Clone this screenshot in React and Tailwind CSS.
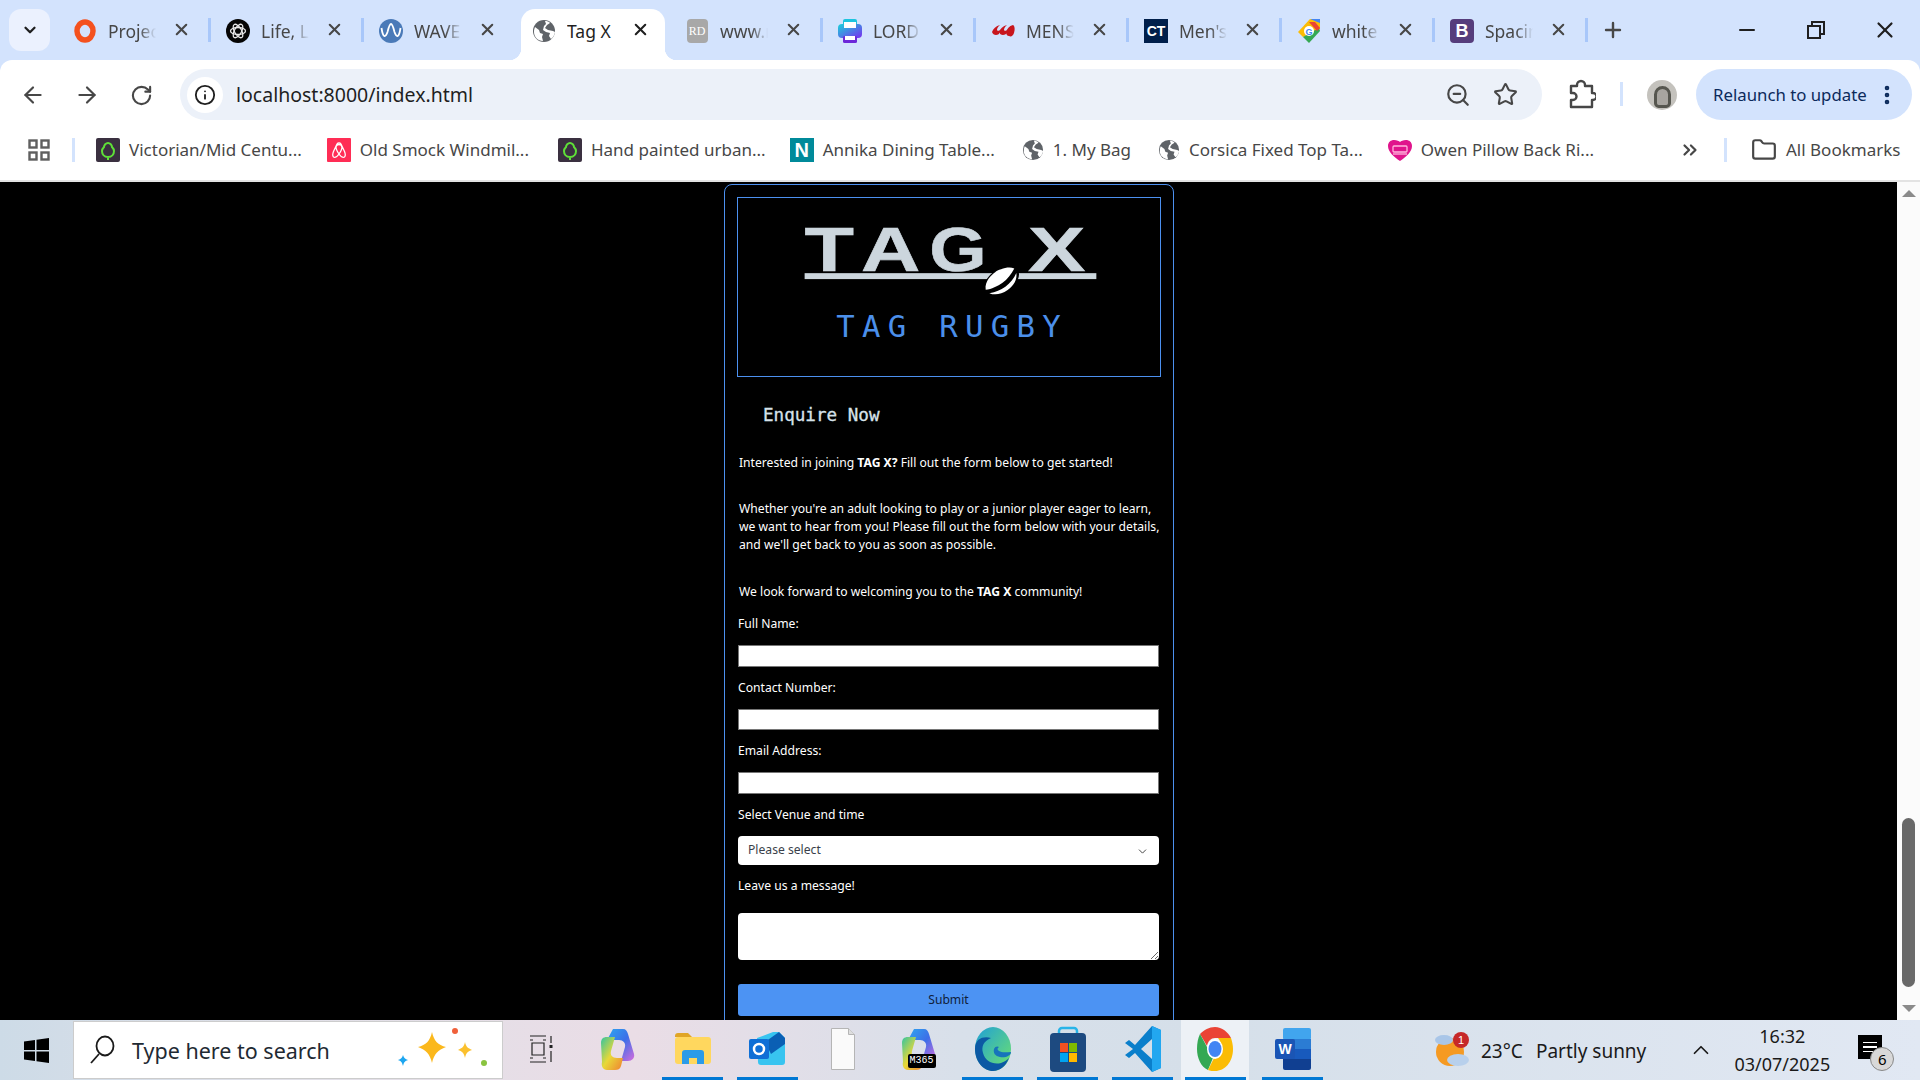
import React from 'react';
import { ArrowLeft, ArrowRight, RotateCw, ZoomOut, Star, Folder, X, Plus, Minus, ChevronDown, ChevronsRight, ChevronUp, EllipsisVertical, Info } from 'lucide-react';

const Globe = ({ size = 24 }) => (
    <svg width={size} height={size} viewBox="0 0 24 24">
        <circle cx="12" cy="12" r="11" fill="#5f6368" />
        <path d="M3 8l4 3 1 3 3 1-1 3 1 4c-5 0-9-4-9-9 0-2 .4-3.500 1-5z" fill="#fff" />
        <path d="M13 2c2 0 4 .6 5 2l-3 2-2 3 3 2 5 1 2 1c-.4 3-2 5.500-4 7l-2-3 1-3-4-1-3-2 1-4 2-2z" fill="#fff" />
    </svg>
);

const Ring = () => (
    <svg width="24" height="24" viewBox="0 0 24 24"><ellipse cx="12" cy="12" rx="8" ry="9" fill="none" stroke="#f4511e" strokeWidth="5.500" /></svg>
);

const Knot = () => (
    <svg width="24" height="24" viewBox="0 0 24 24">
        <circle cx="12" cy="12" r="12" fill="#050505" />
        <g fill="none" stroke="#e8e8e8" strokeWidth="1.300">
            <ellipse cx="12" cy="12" rx="7.500" ry="3.500" />
            <ellipse cx="12" cy="12" rx="7.500" ry="3.500" transform="rotate(60 12 12)" />
            <ellipse cx="12" cy="12" rx="7.500" ry="3.500" transform="rotate(120 12 12)" />
        </g>
    </svg>
);

const Wave = () => (
    <svg width="24" height="24" viewBox="0 0 24 24">
        <circle cx="12" cy="12" r="12" fill="#4a7ab8" />
        <path d="M2.500 9c1.500 10 4 10 6 4 1-4 2-8 3.500-8s2.500 4 3.500 8c2 6 4.500 6 6-4" fill="none" stroke="#fff" strokeWidth="1.800" />
    </svg>
);

const Rd = () => (
    <div className="w-[21px] h-[24px] rounded-[4px] bg-[#a8a8a8] text-white text-[12px] flex items-center justify-center font-['Liberation_Serif',serif]">RD</div>
);

const Printer = () => (
    <svg width="24" height="24" viewBox="0 0 24 24">
        <defs>
            <linearGradient id="pr" x1="0" y1="0" x2="1" y2="1">
                <stop offset="0" stopColor="#19d3da" />
                <stop offset="1" stopColor="#7a2df0" />
            </linearGradient>
        </defs>
        <rect x="5" y="0" width="14" height="8" rx="2" fill="#1cc4de" />
        <rect x="0" y="5" width="24" height="14" rx="4" fill="url(#pr)" />
        <rect x="6" y="3" width="12" height="6" fill="#fff" />
        <rect x="5" y="17" width="14" height="7" rx="1.500" fill="#6d28d9" />
        <rect x="7" y="17" width="10" height="4" fill="#fff" />
    </svg>
);

const Ccc = () => (
    <svg width="24" height="24" viewBox="0 0 24 24">
        <path d="M1 13c1-3 4-6 8-7-2 2-3 3-3 5 1 2 3 0 4-1-1 2-2 3-2 5-3 2-6 1-7-2zM8 13c1-3 4-6 8-7-2 2-3 3-3 5 1 2 3 0 4-1-1 2-2 3-2 5-3 2-6 1-7-2zM15 13c1-3 3-6 7-7 2 1 2 5 1 8-1 3-3 4-5 3-2 0-3-2-3-4z" fill="#c8161d" />
    </svg>
);

const Ct = () => (
    <div className="w-[24px] h-[24px] bg-[#001f4b] text-white text-[14px] font-bold flex items-center justify-center font-['Liberation_Sans',sans-serif]">CT</div>
);

const GoogleTag = () => (
    <svg width="24" height="24" viewBox="0 0 24 24">
        <path d="M13 0h10v10z" fill="#4285f4" />
        <path d="M13 0L1 13l5 5L23 10V4z" fill="#fbbc04" />
        <path d="M6 18l6 6 11-12-1-3z" fill="#34a853" />
        <path d="M12 3l6 0 5 6-3 3z" fill="#ea4335" />
        <circle cx="12" cy="12" r="5" fill="#fff" />
        <text x="12" y="15.500" textAnchor="middle" fontSize="9" fontWeight="700" fill="#4285f4" fontFamily="Liberation Sans">G</text>
    </svg>
);

const Boot = () => (
    <div className="w-[24px] h-[24px] rounded-[4px] bg-[#563d7c] text-white text-[18px] font-bold flex items-center justify-center font-['Liberation_Sans',sans-serif]">B</div>
);

const Tree = () => (
    <svg width="24" height="24" viewBox="0 0 24 24">
        <rect width="24" height="24" rx="2" fill="#3a3040" />
        <path d="M12 19c-4 0-6-3-6-6 0-2 1-3 2-4 0-2 2-4 4-4s4 2 4 4c1 1 2 2 2 4 0 3-2 6-6 6zm0 0v3" fill="none" stroke="#5fe038" strokeWidth="2" />
    </svg>
);

const Airbnb = () => (
    <svg width="24" height="24" viewBox="0 0 24 24">
        <rect width="24" height="24" rx="1" fill="#ff2d55" />
        <path d="M12 16c-2-3-3-5-3-6.500a3 3 0 0 1 6 0c0 1.500-1 3.500-3 6.500zm0 0c2 3 4 4 5.500 3 1.500-1.500 1-3 0-5.500L14 6c-1-1.500-3-1.500-4 0l-3.500 7.500c-1 2.500-1.500 4 0 5.500 1.500 1 3.500 0 5.500-3z" fill="none" stroke="#fff" strokeWidth="1.300" />
    </svg>
);

const Annika = () => (
    <div className="w-[24px] h-[24px] bg-[#008a9a] text-white text-[20px] font-bold flex items-center justify-center font-['Liberation_Sans',sans-serif]">N</div>
);

const Heart = () => (
    <svg width="24" height="24" viewBox="0 0 24 24">
        <path d="M12 23C6 19 0 14 0 8c0-4 3-6 6-6 3 0 5 1 6 2 1-1 3-2 6-2 3 0 6 2 6 6 0 6-6 11-12 15z" fill="#e0148c" />
        <rect x="5" y="8" width="14" height="6" rx="1" fill="none" stroke="#ffb6dd" strokeWidth="1.300" />
        <path d="M5 16h14" stroke="#ffb6dd" strokeWidth="1.300" />
    </svg>
);

const tabs = [
    { title: 'Project', icon: <Ring /> },
    { title: 'Life, Lessons', icon: <Knot /> },
    { title: 'WAVE Report', icon: <Wave /> },
    { title: 'Tag X', icon: <Globe />, active: true },
    { title: 'www.rugby', icon: <Rd /> },
    { title: 'LORD Print', icon: <Printer /> },
    { title: 'MENS Rugby', icon: <Ccc /> },
    { title: "Men's Tops", icon: <Ct /> },
    { title: 'white shirt', icon: <GoogleTag /> },
    { title: 'Spacing', icon: <Boot /> },
];

const bookmarks = [
    { label: 'Victorian/Mid Centu...', icon: <Tree />, cls: 'ml-[21px]' },
    { label: 'Old Smock Windmil...', icon: <Airbnb />, cls: 'ml-[25px]' },
    { label: 'Hand painted urban...', icon: <Tree />, cls: 'ml-[29px]' },
    { label: 'Annika Dining Table...', icon: <Annika />, cls: 'ml-[24px]' },
    { label: '1. My Bag', icon: <Globe size={22} />, cls: 'ml-[27px]' },
    { label: 'Corsica Fixed Top Ta...', icon: <Globe size={22} />, cls: 'ml-[27px]' },
    { label: 'Owen Pillow Back Ri...', icon: <Heart />, cls: 'ml-[25px]' },
];

const Tab = ({ tab }) => (
    <div className="relative w-[153px] h-[60px] shrink-0 flex items-center">
        {tab.active && (
            <>
                <div className="absolute left-[4px] right-[5px] top-[9px] bottom-0 bg-white rounded-t-[14px]" />
                <div className="absolute left-[-8px] bottom-0 w-[12px] h-[12px] bg-[radial-gradient(circle_at_0_0,transparent_12px,white_12.5px)]" />
                <div className="absolute right-[-7px] bottom-0 w-[12px] h-[12px] bg-[radial-gradient(circle_at_100%_0,transparent_12px,white_12.5px)]" />
            </>
        )}
        <div className="relative flex items-center pl-[15px] mt-[2px]">
            <div className="w-[24px] h-[24px] flex items-center justify-center">{tab.icon}</div>
            <div className={tab.active
                ? "ml-[11px] w-[48px] overflow-hidden whitespace-nowrap text-[17.5px] text-[#1f1f1f]"
                : "ml-[11px] w-[48px] overflow-hidden whitespace-nowrap text-[17.5px] text-[#474747] [mask-image:linear-gradient(to_right,black_65%,transparent)]"}>{tab.title}</div>
            <X size={19} strokeWidth={2.6} className={tab.active ? "ml-[16px] -mt-[3px] text-[#1f1f1f]" : "ml-[16px] -mt-[3px] text-[#474747]"} />
        </div>
        {!tab.active && tab.title !== 'WAVE Report' && <div className="absolute right-0 top-[18px] w-[3px] h-[24px] bg-[#a8c7fa]" />}
    </div>
);

const Field = ({ label }) => (
    <div className="mt-[12px] first:mt-[14px]">
        <label className="block h-[18px] leading-[18px] text-[12.15px] text-white ml-[1px]">{label}</label>
        <input type="text" className="block mt-[12px] ml-[1px] w-[421px] h-[21.5px] bg-white border border-[#767676]" />
    </div>
);

const Slot = ({ children, on, width = 'w-[75px]' }) => (
    <div className={`${width} h-full shrink-0 flex flex-col items-center`}>
        <div className="flex-1 flex items-center justify-center">{children}</div>
        <div className={on ? "w-[61px] h-[3px] bg-[#0078d4]" : "w-[61px] h-[3px]"} />
    </div>
);

const Files = () => (
    <svg width="38" height="36" viewBox="0 0 38 36">
        <path d="M1 5a3 3 0 0 1 3-3h10l4 4H1z" fill="#e0a526" />
        <rect x="1" y="6" width="36" height="27" rx="3" fill="#ffd75e" />
        <path d="M8 33V22a3 3 0 0 1 3-3h16a3 3 0 0 1 3 3v11h-7v-6h-8v6z" fill="#2b9be8" />
    </svg>
);

const Outlook = () => (
    <svg width="38" height="38" viewBox="0 0 38 38">
        <path d="M8 8L24 2h6l6 6v24a3 3 0 0 1-3 3H12a3 3 0 0 1-3-3z" fill="#38c4f0" />
        <path d="M16 12L30 2l6 6v6L22 24z" fill="#0a5fb4" />
        <rect x="0" y="9" width="20" height="20" rx="2" fill="#0f6fd6" />
        <circle cx="10" cy="19" r="5" fill="none" stroke="#fff" strokeWidth="2.500" />
    </svg>
);

const BlankFile = () => (
    <svg width="24" height="42" viewBox="0 0 24 42">
        <path d="M.5.5h17l6 6v35H.500z" fill="#fafafa" stroke="#b5b5b5" />
        <path d="M17.500.5v6h6" fill="#dedede" stroke="#b5b5b5" />
    </svg>
);

const CopilotMark = ({ w = 36, h = 44 }) => (
    <svg width={w} height={h} viewBox="0 0 36 44">
        <defs>
            <linearGradient id="cpa" x1="0" y1="0" x2="1" y2="1">
                <stop offset="0" stopColor="#2ea6f0" />
                <stop offset="0.5" stopColor="#3c6fe8" />
                <stop offset="1" stopColor="#d66cdc" />
            </linearGradient>
            <linearGradient id="cpb" x1="0" y1="0" x2="1" y2="1">
                <stop offset="0" stopColor="#34c4a0" />
                <stop offset="0.5" stopColor="#e8d838" />
                <stop offset="1" stopColor="#f08030" />
            </linearGradient>
        </defs>
        <path d="M14 2h10c3 0 4 2 5 5l6 20c1 4-2 7-6 7h-7l4-14c1-4-2-7-6-7H8z" fill="url(#cpa)" />
        <path d="M2 16c0-4 2-6 6-6h8l-4 14c-1 4 1 7 6 7h6l-2 8c-1 3-3 4-6 4H8c-4 0-6-4-5-8z" fill="url(#cpb)" />
    </svg>
);

const Edge = () => (
    <svg width="38" height="46" viewBox="0 0 38 46">
        <defs>
            <linearGradient id="edg" x1="0" y1="0" x2="1" y2="1">
                <stop offset="0" stopColor="#1f9fd8" />
                <stop offset="1" stopColor="#6fe36b" />
            </linearGradient>
        </defs>
        <ellipse cx="19" cy="23" rx="18" ry="22" fill="url(#edg)" />
        <path d="M1 23C1 12 10 10 17 12c-7 3-10 8-8 15 2 8 10 12 18 10 3-1 6-3 8-5-3 8-9 13-16 13C9 45 1 35 1 23z" fill="#0c59a4" />
        <path d="M37 26c0 4-6 6-11 5-5-1-7-4-6-8 1-3 4-3 5-2-2 1-2 3 0 4 3 2 8 1 12 1z" fill="#1774bb" />
    </svg>
);

const Store = () => (
    <svg width="36" height="46" viewBox="0 0 36 46">
        <path d="M9 12V5a3 3 0 0 1 3-3h12a3 3 0 0 1 3 3v7" fill="none" stroke="#28b4e8" strokeWidth="2.500" />
        <rect x="0" y="7" width="36" height="39" rx="4" fill="#1d4a80" />
        <rect x="10" y="17" width="8" height="9" fill="#f25022" />
        <rect x="19" y="17" width="8" height="9" fill="#7fba00" />
        <rect x="10" y="27" width="8" height="9" fill="#00a4ef" />
        <rect x="19" y="27" width="8" height="9" fill="#ffb900" />
    </svg>
);

const Vscode = () => (
    <svg width="36" height="46" viewBox="0 0 36 46">
        <path d="M27 0l9 4v38l-9 4L10 27 4 32l-4-3 8-6-8-6 4-3 6 5zm0 13L16 23l11 10z" fill="#0a7fcb" />
        <path d="M27 0l9 4v38l-9 4z" fill="#22a7f0" />
    </svg>
);

const Chrome = () => (
    <svg width="36" height="46" viewBox="0 0 36 46">
        <path d="M18 1c7 0 13 5 16 11H18c-4 0-7 3-8 8L3 8C7 4 12 1 18 1z" fill="#ea4335" />
        <path d="M3 8l7 13c1 4 4 6 8 6l-7 17C4 41 0 32 0 23 0 17 1 12 3 8z" fill="#34a853" />
        <path d="M34 12c1 3 2 7 2 11 0 13-8 22-18 22-2 0-5 0-7-1l9-18c2-1 4-3 4-6 0-3-1-6-3-8z" fill="#fbbc04" />
        <ellipse cx="18" cy="23" rx="8" ry="10" fill="#fff" />
        <ellipse cx="18" cy="23" rx="6.500" ry="8" fill="#4285f4" />
    </svg>
);

const Word = () => (
    <svg width="36" height="44" viewBox="0 0 36 44">
        <rect x="8" y="1" width="28" height="12" rx="2" fill="#41a5ee" />
        <rect x="8" y="12" width="28" height="11" fill="#2b7cd3" />
        <rect x="8" y="22" width="28" height="11" fill="#185abd" />
        <path d="M8 32h28v9a2 2 0 0 1-2 2H10a2 2 0 0 1-2-2z" fill="#103f91" />
        <rect x="0" y="12" width="20" height="20" rx="2" fill="#1a55b5" />
        <text x="10" y="27" textAnchor="middle" fontSize="14" fontWeight="700" fill="#fff" fontFamily="Liberation Sans">W</text>
    </svg>
);

const Sparkles = () => (
    <svg width="94" height="52" viewBox="0 0 94 52">
        <path d="M36 6c2 9 6 13 14 15-8 3-12 7-14 16-2-9-6-13-14-16 8-2 12-6 14-15z" fill="#fbb81c" />
        <path d="M69 16c1 5 3 6 7 8-4 1-6 3-7 8-1-5-3-7-7-8 4-2 6-3 7-8z" fill="#fbc02d" />
        <path d="M7 29c1 3 2 4 5 5-3 1-4 2-5 6-1-4-2-5-5-6 3-1 4-2 5-5z" fill="#1da6f0" />
        <circle cx="59" cy="5" r="3" fill="#f0603a" />
        <circle cx="88" cy="37" r="3" fill="#8ac440" />
    </svg>
);

const Weather = () => (
    <svg width="38" height="36" viewBox="0 0 38 36">
        <circle cx="16" cy="20" r="14" fill="#f59a23" />
        <ellipse cx="10" cy="8" rx="9" ry="5" fill="#a9c6e8" />
        <ellipse cx="24" cy="28" rx="11" ry="6" fill="#b8d0ec" />
        <circle cx="27" cy="8" r="8" fill="#c62828" />
        <text x="27" y="12" textAnchor="middle" fontSize="11" fill="#fff" fontFamily="Liberation Sans">1</text>
    </svg>
);

const App = () => {
    return (
        <div className="w-[1920px] h-[1080px] flex flex-col overflow-hidden font-['Noto_Sans',sans-serif]">
            {/* tab strip */}
            <div className="h-[60px] shrink-0 bg-[#d3e3fd] flex items-start">
                <div className="ml-[9px] mt-[9px] w-[41px] h-[42px] rounded-[12px] bg-[#ebf1fe] flex items-center justify-center">
                    <ChevronDown size={18} strokeWidth={3} className="text-[#1f1f1f]" />
                </div>
                <div className="ml-[8px] flex">
                    {tabs.map(t => <Tab key={t.title} tab={t} />)}
                </div>
                <Plus size={24} strokeWidth={2.4} className="ml-[13px] mt-[18px] text-[#474747]" />
                <Minus size={24} strokeWidth={2} className="ml-[110px] mt-[18px] text-[#1f1f1f]" />
                <svg width="18" height="18" viewBox="0 0 18 18" className="ml-[48px] mt-[21px]">
                    <path d="M1 5h12v12H1zM5 5V1h12v12h-4" fill="none" stroke="#1f1f1f" strokeWidth="2" />
                </svg>
                <X size={26} strokeWidth={2} className="ml-[47px] mt-[17px] text-[#1f1f1f]" />
            </div>

            {/* toolbar */}
            <div className="h-[60px] shrink-0 bg-[#d3e3fd]">
                <div className="h-full bg-white rounded-t-[12px] flex items-start">
                    <ArrowLeft size={26} strokeWidth={2} className="ml-[20px] mt-[22px] text-[#474747]" />
                    <ArrowRight size={26} strokeWidth={2} className="ml-[28px] mt-[22px] text-[#474747]" />
                    <RotateCw size={23} strokeWidth={2.2} className="ml-[30px] mt-[24px] text-[#474747]" />
                    <div className="ml-[27px] mt-[9px] w-[1362px] h-[51px] rounded-full bg-[#ecf1f9] flex items-center">
                        <div className="ml-[7px] w-[36px] h-[36px] rounded-full bg-white flex items-center justify-center">
                            <Info size={22} strokeWidth={2} className="text-[#1f1f1f]" />
                        </div>
                        <span className="ml-[13px] text-[19.5px] text-[#1f1f1f]">localhost:8000/index.html</span>
                        <ZoomOut size={26} strokeWidth={2} className="ml-auto text-[#474747]" />
                        <Star size={25} strokeWidth={2} className="ml-[22px] mr-[24px] text-[#474747]" />
                    </div>
                    <svg width="28" height="30" viewBox="0 0 28 30" className="ml-[26px] mt-[19px]">
                        <path d="M3 7h6V6a4 4 0 0 1 8 0v1h7v7h1a3.500 3.500 0 0 1 0 7h-1v7H3v-7h2a3.500 3.500 0 0 0 0-7H3z" fill="none" stroke="#474747" strokeWidth="2.400" strokeLinejoin="round" />
                    </svg>
                    <div className="ml-[24px] mt-[22px] w-[3px] h-[24px] bg-[#d3e3fd]" />
                    <div className="ml-[24px] mt-[20px] w-[30px] h-[30px] rounded-full bg-[#c4c2bd] overflow-hidden flex items-center justify-center">
                        <div className="w-[17px] h-[22px] rounded-t-[9px] rounded-b-[5px] bg-[#a8a5a0] border-[3px] border-[#56564f] mt-[3px]" />
                    </div>
                    <div className="ml-[19px] mt-[9px] w-[216px] h-[51px] rounded-full bg-[#d3e3fd] flex items-center text-[#0b2a5b]">
                        <span className="ml-[17px] text-[16.8px] whitespace-nowrap">Relaunch to update</span>
                        <EllipsisVertical size={24} strokeWidth={2.6} className="ml-[8px]" />
                    </div>
                </div>
            </div>

            {/* bookmarks */}
            <div className="h-[62px] shrink-0 bg-white border-b-[2px] border-[#e3e3e3] flex items-center">
                <svg width="22" height="22" viewBox="0 0 22 22" className="ml-[28px]">
                    <g fill="none" stroke="#5f5f5f" strokeWidth="2.400">
                        <rect x="1.500" y="1.500" width="7" height="7" />
                        <rect x="13.500" y="1.500" width="7" height="7" />
                        <rect x="1.500" y="13.500" width="7" height="7" />
                        <rect x="13.500" y="13.500" width="7" height="7" />
                    </g>
                </svg>
                <div className="ml-[22px] w-[3px] h-[24px] bg-[#d3e3fd]" />
                {bookmarks.map(b => (
                    <div key={b.label} className={`${b.cls} flex items-center`}>
                        {b.icon}
                        <span className="ml-[9px] text-[17px] text-[#474747] whitespace-nowrap">{b.label}</span>
                    </div>
                ))}
                <ChevronsRight size={22} strokeWidth={2.4} className="ml-[85px] text-[#474747]" />
                <div className="ml-[23px] w-[3px] h-[24px] bg-[#d3e3fd]" />
                <Folder size={26} strokeWidth={2} className="ml-[24px] text-[#474747]" />
                <span className="ml-[9px] text-[17px] text-[#474747] whitespace-nowrap">All Bookmarks</span>
            </div>

            {/* page */}
            <div className="flex-1 min-h-0 flex overflow-hidden">
                <div className="w-[1897px] bg-black pt-[2px]">
                    <div className="w-[450px] ml-[724px] border border-[#4c90ef] rounded-t-[8px] px-[12px] pt-[12px] pb-[20px]">
                        <div className="w-[424px] h-[180px] border border-[#4c90ef]">
                            <svg width="422" height="178" viewBox="737 197 424 180">
                                <g fill="#ccd6dd" stroke="#ccd6dd" strokeWidth="0.6" fontFamily="Liberation Sans" fontWeight="700" fontSize="63">
                                    <text x="803" y="271" textLength="50" lengthAdjust="spacingAndGlyphs">T</text>
                                    <text x="860" y="271" textLength="60" lengthAdjust="spacingAndGlyphs">A</text>
                                    <text x="929" y="271" textLength="58" lengthAdjust="spacingAndGlyphs">G</text>
                                    <text x="1029" y="271" textLength="58" lengthAdjust="spacingAndGlyphs">X</text>
                                </g>
                                <rect x="803" y="273" width="295" height="6" fill="#ccd6dd" />
                                <g transform="rotate(-35 1002 281)">
                                    <ellipse cx="1002" cy="281" rx="20" ry="12" fill="#000" />
                                    <path d="M984 279c4-8 14-9 18-9s14 2 18 8c-6 3-12 5-18 5s-13-1-18-4z" fill="#fff" />
                                    <path d="M985 284c6 3 11 4 17 4s12-2 17-5c-3 6-9 9-17 9s-14-3-17-8z" fill="#fff" />
                                </g>
                                <text x="835" y="338" fill="#4b8fea" fontFamily="DejaVu Sans Mono" fontSize="31" textLength="227" lengthAdjust="spacing">TAG RUGBY</text>
                            </svg>
                        </div>
                        <h2 className="mt-[26px] ml-[26px] h-[24px] leading-[24px] text-[17.6px] text-[#d6e2ea] [-webkit-text-stroke:0.3px_#d6e2ea] font-['DejaVu_Sans_Mono',monospace]">Enquire Now</h2>
                        <p className="mt-[27px] ml-[2px] text-[12.15px] leading-[18px] text-white">Interested in joining <b>TAG X?</b> Fill out the form below to get started!</p>
                        <p className="mt-[28px] ml-[2px] w-[424px] text-[12.15px] leading-[18px] text-white">Whether you're an adult looking to play or a junior player eager to learn, we want to hear from you! Please fill out the form below with your details, and we'll get back to you as soon as possible.</p>
                        <p className="mt-[29px] ml-[2px] text-[12.15px] leading-[18px] text-white">We look forward to welcoming you to the <b>TAG X</b> community!</p>
                        <form>
                            <Field label="Full Name:" />
                            <Field label="Contact Number:" />
                            <Field label="Email Address:" />
                            <label className="block mt-[12.5px] ml-[1px] h-[18px] leading-[18px] text-[12.15px] text-white">Select Venue and time</label>
                            <div className="relative mt-[12px] ml-[1px] w-[421px]">
                                <select className="block w-full h-[29px] pl-[10px] rounded-[4px] bg-white appearance-none text-[12.15px] text-[#3a3f4a]">
                                    <option>Please select</option>
                                </select>
                                <ChevronDown size={13} strokeWidth={1.8} className="absolute right-[10px] top-[9px] text-[#444]" />
                            </div>
                            <label className="block mt-[12px] ml-[1px] h-[18px] leading-[18px] text-[12.15px] text-white">Leave us a message!</label>
                            <textarea className="block mt-[18px] ml-[1px] w-[421px] h-[47px] rounded-[4px] bg-white" />
                            <button type="button" className="block mt-[24px] ml-[1px] w-[421px] h-[32px] rounded-[3px] bg-[#4c93f3] text-[12.15px] text-[#10203a]">Submit</button>
                        </form>
                    </div>
                </div>
                {/* scrollbar */}
                <div className="w-[23px] bg-[#fbfbfb] flex flex-col items-center">
                    <div className="mt-[8px] w-0 h-0 border-x-[7.500px] border-x-transparent border-b-[7px] border-b-[#8a8a8a]" />
                    <div className="mt-[621px] w-[13px] h-[169px] rounded-full bg-[#686868]" />
                    <div className="mt-[18px] w-0 h-0 border-x-[7.500px] border-x-transparent border-t-[7px] border-t-[#8a8a8a]" />
                </div>
            </div>

            {/* taskbar */}
            <div className="h-[60px] shrink-0 flex items-center bg-[linear-gradient(90deg,#cddbe7_0%,#e0e0e8_15%,#eadde6_33%,#d8e0ea_50%,#d5dfe9_62%,#e1e8f3_100%)]">
                <div className="w-[73px] h-full flex items-center justify-center">
                    <svg width="25" height="25" viewBox="0 0 25 25">
                        <path d="M0 3.500l11-1.500v10H0zM12.500 1.800L25 0v12H12.500zM0 13.500h11V23L0 21.500zM12.500 13.500H25V25l-12.500-1.800z" fill="#000" />
                    </svg>
                </div>
                <div className="w-[430px] h-[58px] bg-white border border-[#cccccc] flex items-center">
                    <svg width="26" height="30" viewBox="0 0 26 30" className="ml-[15px]">
                        <ellipse cx="16" cy="11" rx="8.500" ry="9.500" fill="none" stroke="#1a1a1a" strokeWidth="1.800" />
                        <path d="M10 19L2 28" stroke="#1a1a1a" strokeWidth="1.800" />
                    </svg>
                    <span className="ml-[17px] mt-[2px] text-[21.5px] text-[#1f2a33] whitespace-nowrap">Type here to search</span>
                    <div className="ml-auto mr-[12px] mt-[4px]"><Sparkles /></div>
                </div>
                <div className="h-full flex">
                    <Slot>
                        <svg width="24" height="28" viewBox="0 0 24 28">
                            <g fill="none" stroke="#222" strokeWidth="1.200">
                                <path d="M1 1h16M1 27h16M3 8h12v12H3z" />
                                <path d="M1 5h3M14 5h3M1 23h3M14 23h3M22 1v7M22 16v11" />
                            </g>
                            <rect x="20.500" y="10" width="3" height="3" fill="#222" />
                        </svg>
                    </Slot>
                    <Slot width="w-[77px]"><CopilotMark /></Slot>
                    <Slot on><Files /></Slot>
                    <Slot on><Outlook /></Slot>
                    <Slot><BlankFile /></Slot>
                    <Slot>
                        <div className="relative">
                            <CopilotMark />
                            <span className="absolute left-[8px] top-[27px] bg-black text-white text-[10px] leading-[14px] px-[2px] rounded-[2px] font-['Liberation_Mono',monospace]">M365</span>
                        </div>
                    </Slot>
                    <Slot on><Edge /></Slot>
                    <Slot on><Store /></Slot>
                    <Slot on><Vscode /></Slot>
                    <div className="ml-[1px] mr-[6px] bg-[#edf1f6]"><Slot on width="w-[68px]"><Chrome /></Slot></div>
                    <Slot on><Word /></Slot>
                </div>
                <div className="ml-[104px]"><Weather /></div>
                <span className="ml-[9px] mt-[2px] text-[19px] text-[#1a1a1a] whitespace-nowrap">23°C</span>
                <span className="ml-[13px] mt-[2px] text-[19px] text-[#1a1a1a] whitespace-nowrap">Partly sunny</span>
                <ChevronUp size={26} strokeWidth={1.6} className="ml-[42px] text-[#1a1a1a]" />
                <div className="ml-[20px] w-[96px] flex flex-col items-center text-[#1a1a1a] leading-[28px] text-[18px]">
                    <span>16:32</span>
                    <span>03/07/2025</span>
                </div>
                <div className="relative ml-[28px] w-[24px] h-[24px] -mt-[6px] bg-black flex flex-col gap-[3px] items-center justify-center">
                    <div className="w-[14px] h-[1.500px] bg-white" />
                    <div className="w-[14px] h-[1.500px] bg-white" />
                    <div className="w-[14px] h-[1.500px] bg-white" />
                    <div className="absolute left-[12px] top-[12px] w-[24px] h-[24px] rounded-full bg-[#d8d8d8] border border-[#888] flex items-center justify-center text-[15px] text-black">6</div>
                </div>
            </div>
        </div>
    );
};

export default App;
